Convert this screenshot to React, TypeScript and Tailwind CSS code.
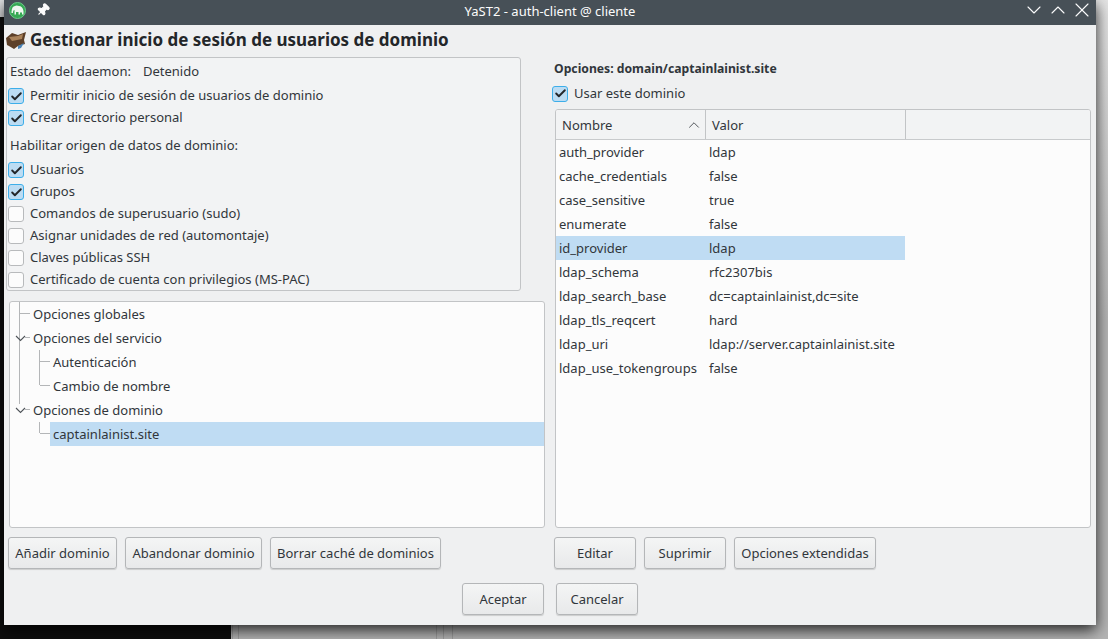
import React from "react";
import { Check, ChevronUp, ChevronDown, X, Pin } from "lucide-react";

const font = { fontFamily: '"Noto Sans", sans-serif' };

function Cb({ label, checked, className = "" }: { label: string; checked?: boolean; className?: string }) {
  return (
    <div className={`flex h-[22px] items-center gap-[6px] ${className}`}>
      <span className={`flex h-[16px] w-[16px] shrink-0 items-center justify-center rounded-[3px] border ${checked ? "border-[#3daee9] bg-[#bcdcf3]" : "border-[#b8babc] bg-[#fcfcfc]"}`}>
        {checked && <Check size={13} strokeWidth={3.5} className="text-[#232629]" />}
      </span>
      <span>{label}</span>
    </div>
  );
}

function Btn({ label, className = "" }: { label: string; className?: string }) {
  return (
    <button className={`flex h-[32px] items-center justify-center rounded-[3px] border border-[#b4b6b8] bg-gradient-to-b from-[#f4f5f5] to-[#e8e9ea] pt-[1px] text-[#31363b] shadow-[0_1px_1px_rgba(0,0,0,0.15)] ${className}`}>
      {label}
    </button>
  );
}

const rows: [string, string][] = [
  ["auth_provider", "ldap"],
  ["cache_credentials", "false"],
  ["case_sensitive", "true"],
  ["enumerate", "false"],
  ["id_provider", "ldap"],
  ["ldap_schema", "rfc2307bis"],
  ["ldap_search_base", "dc=captainlainist,dc=site"],
  ["ldap_tls_reqcert", "hard"],
  ["ldap_uri", "ldap://server.captainlainist.site"],
  ["ldap_use_tokengroups", "false"],
];

const tree: { label: string; pl: string }[] = [
  { label: "Opciones globales", pl: "pl-[23px]" },
  { label: "Opciones del servicio", pl: "pl-[23px]" },
  { label: "Autenticación", pl: "pl-[43px]" },
  { label: "Cambio de nombre", pl: "pl-[43px]" },
  { label: "Opciones de dominio", pl: "pl-[23px]" },
];

function TreeLines() {
  return (
    <svg className="absolute left-0 top-0" width="60" height="150" fill="none" stroke="#b4b6b8" strokeWidth="1" shapeRendering="crispEdges">
      <path d="M9.500 0V102M10 11.500H20M15 35.500H20M15 107.500H20" />
      <path d="M29.500 48V83M30 59.500H40M30 83.500H40M29.500 120V131M30 131.500H40" />
      <g shapeRendering="geometricPrecision" stroke="#50555a" strokeWidth="1.1">
        <path d="M6 34L10.500 38.500L15 34" />
        <path d="M6 106L10.500 110.500L15 106" />
      </g>
    </svg>
  );
}

export default function App() {
  return (
    <div className="relative flex h-[639px] w-[1108px] overflow-hidden bg-[#0e0e0e] text-[13px] text-[#31363b]" style={font}>
      <div className="flex h-full w-[231px] flex-col">
        <div className="h-[17px] w-[4px] bg-[#e2e3e4]" />
      </div>
      <div className="flex h-full flex-1 flex-col justify-end bg-gradient-to-b from-[#e4e4e4] via-[#b4b4b4] to-[#b4b4b4]">
        <div className="flex h-[14px] w-full">
          <div className="ml-[1px] h-full w-[7px] border-x border-[#00000022]" />
          <div className="h-full w-[198px] border-r border-[#00000022]" />
          <div className="ml-[6px] h-full w-[10px] border-x border-[#00000022]" />
        </div>
      </div>

      <div className="absolute left-[4px] top-0 flex h-[625px] w-[1092px] flex-col bg-[#eff0f1] shadow-[0_5px_14px_rgba(0,0,0,0.8)]">
        <div className="relative flex h-[25px] shrink-0 items-center bg-[#475057] pb-[5px] text-[#fcfcfc]">
          <span className="ml-[5px] flex h-[17px] w-[17px] items-center justify-center rounded-full border border-[#6cc98a] bg-[#35a853]">
            <svg width="13" height="10" viewBox="0 0 13 10" fill="#eef6ef">
              <path d="M0.500 7C0.500 3 2 1 4 1C5 0 7 0.500 8 1C10 1 12 2.500 12.500 6V9.500H11V7.500H9V9.500H7.500V7H5V9.500H3.500V5C2.500 5 2 6 2 8H0.500Z" />
            </svg>
          </span>
          <Pin size={14} fill="#fcfcfc" strokeWidth={2} className="ml-[10px] rotate-45" />
          <span className="absolute inset-x-0 top-[2px] text-center">YaST2 - auth-client @ cliente</span>
          <div className="ml-auto mr-[2px] flex items-center">
            <ChevronDown size={24} strokeWidth={1.1} />
            <ChevronUp size={24} strokeWidth={1.1} />
            <X size={24} strokeWidth={1.1} />
          </div>
        </div>

        <div className="flex min-h-0 flex-1 flex-col px-[2px]">
          <div className="flex h-[32px] shrink-0 items-center gap-[4px] pb-[2px]">
            <svg width="20" height="17" viewBox="0 0 20 17">
              <path d="M0 6L6 1L12 3L20 0L18 8L19 12L12 14L8 17L3 14L1 13Z" fill="#5d4029" />
              <path d="M3 5L12 4L17 2L16 7L6 9Z" fill="#a9825a" />
              <path d="M12 14L18 11L15 16L12 17Z" fill="#4a84b8" />
            </svg>
            <h1 className="text-[17px] font-bold text-[#232629]">Gestionar inicio de sesión de usuarios de dominio</h1>
          </div>

          <div className="flex min-h-0 flex-1 gap-[9px]">
            {/* left */}
            <div className="flex w-[539px] shrink-0 flex-col">
              <div className="h-[234px] w-[515px] rounded-[3px] border border-[#c2c4c6] bg-[#f2f3f4] pl-[1px]">
                <div className="flex h-[27px] items-center gap-[12px] pl-[2px]">
                  <span>Estado del daemon:</span>
                  <span>Detenido</span>
                </div>
                <Cb label="Permitir inicio de sesión de usuarios de dominio" checked />
                <Cb label="Crear directorio personal" checked />
                <div className="flex h-[30px] items-center pl-[2px] pt-[4px]">Habilitar origen de datos de dominio:</div>
                <Cb label="Usuarios" checked />
                <Cb label="Grupos" checked />
                <Cb label="Comandos de superusuario (sudo)" />
                <Cb label="Asignar unidades de red (automontaje)" />
                <Cb label="Claves públicas SSH" />
                <Cb label="Certificado de cuenta con privilegios (MS-PAC)" />
              </div>

              <div className="relative ml-[3px] mt-[10px] h-[228px] w-[536px] overflow-hidden rounded-[3px] border border-[#c2c4c6] bg-[#fcfcfc]">
                {tree.map((t) => (
                  <div key={t.label} className={`flex h-[24px] items-center pt-[1px] ${t.pl}`}>
                    <span>{t.label}</span>
                  </div>
                ))}
                <div className="ml-[40px] flex h-[24px] items-center bg-[#bfdcf3] pl-[3px] pt-[1px]">captainlainist.site</div>
                <TreeLines />
              </div>

              <div className="ml-[2px] mt-[9px] flex gap-[8px]">
                <Btn label="Añadir dominio" className="w-[109px]" />
                <Btn label="Abandonar dominio" className="w-[137px]" />
                <Btn label="Borrar caché de dominios" className="w-[171px]" />
              </div>
            </div>

            {/* right */}
            <div className="flex min-w-0 flex-1 flex-col pr-[3px]">
              <div className="flex h-[25px] items-center text-[12.2px] font-bold">Opciones: domain/captainlainist.site</div>
              <Cb label="Usar este dominio" checked className="ml-[-2px] mt-[1px]" />
              <div className="ml-[1px] mt-[4px] flex h-[420px] flex-col overflow-hidden rounded-[3px] border border-[#c2c4c6] bg-[#fcfcfc]">
                <div className="flex h-[30px] shrink-0 border-b border-[#c8cacc] bg-[#f2f3f4]">
                  <div className="flex w-[150px] items-center justify-between border-r border-[#c2c4c6] pl-[6px] pr-[2px] pt-[2px]">
                    <span>Nombre</span>
                    <ChevronUp size={18} strokeWidth={1.1} />
                  </div>
                  <div className="flex w-[200px] items-center border-r border-[#c2c4c6] pl-[6px] pt-[2px]">Valor</div>
                </div>
                {rows.map(([k, v]) => (
                  <div key={k} className={`flex h-[24px] w-[349px] shrink-0 items-center pt-[1px] ${k === "id_provider" ? "bg-[#bfdcf3]" : ""}`}>
                    <span className="w-[150px] pl-[3px]">{k}</span>
                    <span className="whitespace-nowrap pl-[3px]">{v}</span>
                  </div>
                ))}
              </div>
              <div className="mt-[9px] flex gap-[8px]">
                <Btn label="Editar" className="w-[82px]" />
                <Btn label="Suprimir" className="w-[82px]" />
                <Btn label="Opciones extendidas" className="w-[142px]" />
              </div>
            </div>
          </div>

          <div className="flex h-[56px] shrink-0 items-start justify-center gap-[12px] pt-[14px]">
            <Btn label="Aceptar" className="w-[82px]" />
            <Btn label="Cancelar" className="w-[82px]" />
          </div>
        </div>
      </div>
    </div>
  );
}
